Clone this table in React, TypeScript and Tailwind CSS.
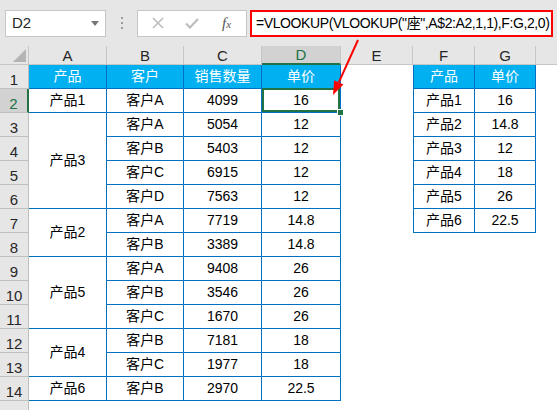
import React from "react";

const cellFont = "font-['Liberation_Sans','Noto_Sans_CJK_SC',sans-serif]";

type Row = {
  a?: string;
  span?: string;
  b: string;
  c: string;
  d: string;
  f?: string;
  g?: string;
};

// rows 2..14 of the sheet; `a` only where a merged A cell starts
const rows: Row[] = [
  { a: "产品1", span: "", b: "客户A", c: "4099", d: "16", f: "产品1", g: "16" },
  { a: "产品3", span: "row-span-4", b: "客户A", c: "5054", d: "12", f: "产品2", g: "14.8" },
  { b: "客户B", c: "5403", d: "12", f: "产品3", g: "12" },
  { b: "客户C", c: "6915", d: "12", f: "产品4", g: "18" },
  { b: "客户D", c: "7563", d: "12", f: "产品5", g: "26" },
  { a: "产品2", span: "row-span-2", b: "客户A", c: "7719", d: "14.8", f: "产品6", g: "22.5" },
  { b: "客户B", c: "3389", d: "14.8" },
  { a: "产品5", span: "row-span-3", b: "客户A", c: "9408", d: "26" },
  { b: "客户B", c: "3546", d: "26" },
  { b: "客户C", c: "1670", d: "26" },
  { a: "产品4", span: "row-span-2", b: "客户B", c: "7181", d: "18" },
  { b: "客户C", c: "1977", d: "18" },
  { a: "产品6", span: "", b: "客户B", c: "2970", d: "22.5" },
];

function RowNum({ n, active }: { n?: number; active?: boolean }) {
  return (
    <div
      className={
        active
          ? "flex items-end justify-center bg-[#d2d2d2] border-b border-[#bfbfbf] border-r-2 border-r-[#217346] text-[#217346] text-[15px] leading-[15px] pb-[1px]"
          : "flex items-end justify-center bg-[#e6e6e6] border-b border-r border-[#bfbfbf] text-[#262626] text-[15px] leading-[15px] pb-[1px]"
      }
    >
      {n}
    </div>
  );
}

function Td({ children, className = "" }: { children?: React.ReactNode; className?: string }) {
  return (
    <div className={`flex items-center justify-center text-[14px] text-black ${className}`}>
      {children}
    </div>
  );
}

const line = "border-r border-b border-[#0070c0]";
const head = "bg-[#00b0f0] text-white border-r border-b border-[#0070c0]";

export default function App() {
  return (
    <div className={`relative w-[557px] h-[410px] overflow-hidden bg-white ${cellFont}`}>
      {/* formula bar */}
      <div className="flex h-[46px] items-center bg-[#e6e6e6] pl-[5px] pr-[4px]">
        <div className="flex h-[27px] w-[101px] items-center justify-between border border-[#c6c6c6] bg-white pl-[6px] pr-[6px] text-[15px] text-[#262626]">
          <span>D2</span>
          <svg width="8" height="5" viewBox="0 0 8 5">
            <path d="M0 0 L8 0 L4 5 Z" fill="#777" />
          </svg>
        </div>
        <div className="flex w-[31px] flex-col items-center gap-[3px]">
          <div className="h-[2px] w-[2px] bg-[#9a9a9a]" />
          <div className="h-[2px] w-[2px] bg-[#9a9a9a]" />
          <div className="h-[2px] w-[2px] bg-[#9a9a9a]" />
        </div>
        <div className="flex h-[27px] w-[110px] items-center border border-[#c6c6c6] bg-white">
          <svg className="ml-[14px]" width="12" height="12" viewBox="0 0 12 12">
            <path d="M1 1 L11 11 M11 1 L1 11" stroke="#bdbdbd" strokeWidth="1.6" />
          </svg>
          <svg className="ml-[21px]" width="14" height="11" viewBox="0 0 14 11">
            <path d="M1 5.5 L5 9.5 L13 1" stroke="#bdbdbd" strokeWidth="2.2" fill="none" />
          </svg>
          <span className="ml-[23px] font-['Liberation_Serif',serif] text-[15px] italic text-[#555]">
            f<span className="text-[11px]">x</span>
          </span>
        </div>
        <div className="ml-[3px] flex h-[27px] flex-1 items-center border-2 border-[#ff0000] bg-white pl-[4px] text-[14px] tracking-[-0.4px] text-black">
          =VLOOKUP(VLOOKUP("座",A$2:A2,1,1),F:G,2,0)
        </div>
      </div>

      {/* sheet */}
      <div className="grid grid-cols-[29px_78px_77px_78px_79px_72px_62px_61px_1fr] grid-rows-[19px] auto-rows-[24px]">
        <div className="relative bg-[#e6e6e6] border-r border-b border-[#c6c6c6]">
          <svg className="absolute bottom-[2px] right-[2px]" width="13" height="13" viewBox="0 0 13 13">
            <path d="M13 0 L13 13 L0 13 Z" fill="#b4b4b4" />
          </svg>
        </div>
        <div className="flex items-center justify-center bg-[#e6e6e6] border-r border-b border-[#c6c6c6] pt-[2px] text-[15px] text-[#262626]">A</div>
        <div className="flex items-center justify-center bg-[#e6e6e6] border-r border-b border-[#c6c6c6] pt-[2px] text-[15px] text-[#262626]">B</div>
        <div className="flex items-center justify-center bg-[#e6e6e6] border-r border-b border-[#c6c6c6] pt-[2px] text-[15px] text-[#262626]">C</div>
        <div className="flex items-center justify-center bg-[#d2d2d2] border-r border-[#c6c6c6] border-b-2 border-b-[#217346] pt-[2px] text-[15px] text-[#217346]">D</div>
        <div className="flex items-center justify-center bg-[#e6e6e6] border-r border-b border-[#c6c6c6] pt-[2px] text-[15px] text-[#262626]">E</div>
        <div className="flex items-center justify-center bg-[#e6e6e6] border-r border-b border-[#c6c6c6] pt-[2px] text-[15px] text-[#262626]">F</div>
        <div className="flex items-center justify-center bg-[#e6e6e6] border-r border-b border-[#c6c6c6] pt-[2px] text-[15px] text-[#262626]">G</div>
        <div className="bg-[#e6e6e6] border-b border-[#c6c6c6]" />

        {/* row 1: headers */}
        <RowNum n={1} />
        <Td className={head}>产品</Td>
        <Td className={head}>客户</Td>
        <Td className={head}>销售数量</Td>
        <Td className={head}>单价</Td>
        <Td />
        <Td className={`${head} border-l`}>产品</Td>
        <Td className={head}>单价</Td>
        <Td />

        {rows.map((r, i) => {
          const n = i + 2;
          return (
            <React.Fragment key={n}>
              <RowNum n={n} active={n === 2} />
              {r.a && <Td className={`${line} ${r.span}`}>{r.a}</Td>}
              <Td className={line}>{r.b}</Td>
              <Td className={line}>{r.c}</Td>
              {n === 2 ? (
                <Td className={`${line} relative`}>
                  {r.d}
                  <div className="absolute -top-px left-0 right-0 bottom-0 border-2 border-[#217346]" />
                  <div className="absolute -bottom-[4px] -right-[4px] h-[7px] w-[7px] border border-white bg-[#217346]" />
                </Td>
              ) : (
                <Td className={line}>{r.d}</Td>
              )}
              <Td />
              {r.f ? <Td className={`${line} border-l`}>{r.f}</Td> : <Td />}
              {r.g ? <Td className={line}>{r.g}</Td> : <Td />}
              <Td />
            </React.Fragment>
          );
        })}
        {/* row 15 peeks in below the table */}
        <RowNum />
      </div>

      {/* annotation arrow */}
      <svg className="pointer-events-none absolute left-0 top-0" width="557" height="410">
        <line x1="358" y1="40" x2="338.8" y2="82.3" stroke="#ff0000" strokeWidth="2" />
        <path d="M333 95 L343.4 84.4 L334.2 80.2 Z" fill="#ff0000" />
      </svg>
    </div>
  );
}
